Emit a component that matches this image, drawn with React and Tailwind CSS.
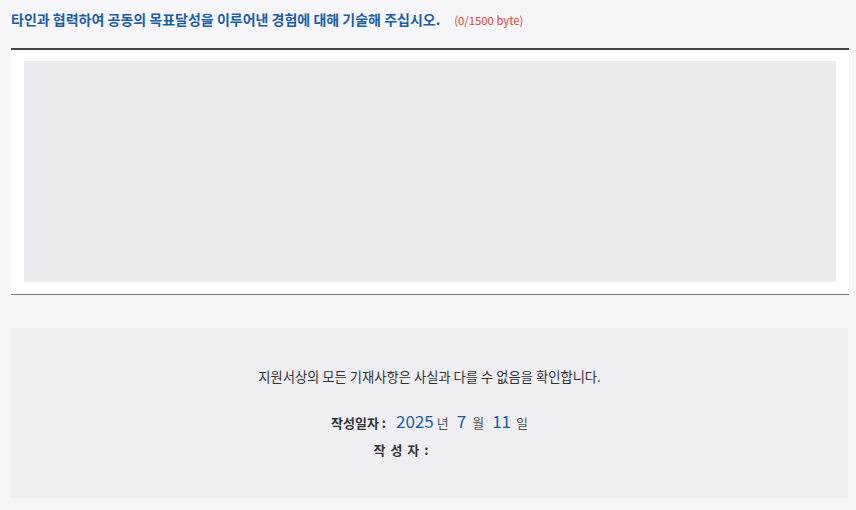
export default function App() {
  return (
    <div
      className="min-h-[510px] bg-[#f6f6f8] pl-[11px] pr-[7px] pt-[9px] text-[#333]"
      style={{ fontFamily: '"Noto Sans CJK KR", "Noto Sans", sans-serif' }}
    >
      {/* 문항 제목 */}
      <div className="flex items-baseline h-[20px] leading-[20px]">
        <h3 className="text-[14px] font-bold text-[#1b5ea8]">
          타인과 협력하여 공동의 목표달성을 이루어낸 경험에 대해 기술해 주십시오.
        </h3>
        <span className="ml-[14px] text-[11.3px] text-[#d9442b]">(0/1500 byte)</span>
      </div>

      {/* 답변 입력 */}
      <div className="mt-[19px] border-t-2 border-b border-t-[#444] border-b-[#777] bg-white px-[13px] pt-[11px] pb-[12px]">
        <textarea
          className="block h-[221px] w-full resize-none border-0 bg-[#ececee] outline-none"
          readOnly
        />
      </div>

      {/* 확인 영역 */}
      <div className="mt-[33px] mr-[1px] h-[170px] bg-[#efeff3] pt-[39px] text-center">
        <p className="text-[13.3px] leading-[20px] text-[#333]">
          지원서상의 모든 기재사항은 사실과 다를 수 없음을 확인합니다.
        </p>
        <div className="mt-[23px] flex justify-center items-baseline text-[13px] leading-[22px]">
          <span className="font-bold">작성일자 :</span>
          <span className="ml-[10px] text-[17px] text-[#1c5aa8]">2025</span>
          <span className="ml-[3px] text-[#555]">년</span>
          <span className="ml-[8px] text-[17px] text-[#1c5aa8]">7</span>
          <span className="ml-[6px] text-[#555]">월</span>
          <span className="ml-[8px] text-[17px] text-[#1c5aa8]">11</span>
          <span className="ml-[5px] text-[#555]">일</span>
        </div>
        <div className="mt-[5px] flex justify-center text-[13px] leading-[22px] pr-[56px]">
          <span className="font-bold tracking-[1px]">작 성 자 :</span>
        </div>
      </div>
    </div>
  );
}
